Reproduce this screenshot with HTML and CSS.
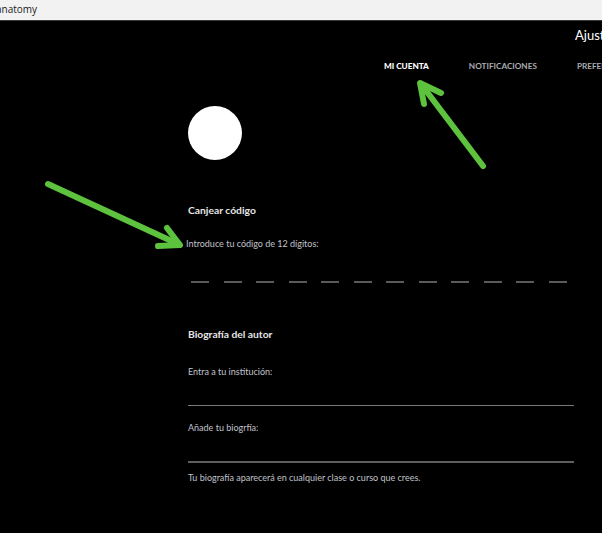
FILE: index.html
```html
<!DOCTYPE html>
<html lang="es">
<head>
<meta charset="utf-8">
<title>Ajustes</title>
<link rel="stylesheet" href="styles.css">
</head>
<body>
<div class="chrome"><span class="chrome-title">anatomy</span></div>
<main class="page">
  <h1 class="page-title">Ajustes de la cuenta</h1>
  <nav class="tabs">
    <span class="tab tab-active">MI CUENTA</span>
    <span class="tab">NOTIFICACIONES</span>
    <span class="tab">PREFERENCIAS</span>
  </nav>
  <section class="content">
    <div class="avatar"></div>
    <h2 class="heading heading-first">Canjear código</h2>
    <p class="label label-code">Introduce tu código de 12 dígitos:</p>
    <div class="code">
      <span></span><span></span><span></span><span></span><span></span><span></span>
      <span></span><span></span><span></span><span></span><span></span><span></span>
    </div>
    <h2 class="heading heading-bio">Biografía del autor</h2>
    <p class="label label-inst">Entra a tu institución:</p>
    <div class="field-line line-inst"></div>
    <p class="label label-bio">Añade tu biogrfía:</p>
    <div class="field-line line-bio"></div>
    <p class="label label-hint">Tu biografía aparecerá en cualquier clase o curso que crees.</p>
  </section>
</main>
<svg class="arrows" width="602" height="533" viewBox="0 0 602 533">
  <g fill="none" stroke="#5dc23d" stroke-width="6" stroke-linecap="round" stroke-linejoin="round">
    <path d="M48 184 L178 244"/>
    <path d="M167 228 L180 245 L158 246"/>
    <path d="M483 166 L421 84"/>
    <path d="M441 93 L420 83 L424 104"/>
  </g>
</svg>
</body>
</html>
```
FILE: styles.css
```css
html, body {
  margin: 0;
  padding: 0;
}
body {
  width: 602px;
  height: 533px;
  overflow: hidden;
  background: #000;
  font-family: "Lato", "Open Sans", sans-serif;
  position: relative;
}
.chrome {
  height: 21px;
  background: #f2f2f2;
  border-bottom: 1px solid #3a3a3a;
  box-sizing: border-box;
  display: flex;
  align-items: center;
  padding-bottom: 3px;
}
.chrome-title {
  margin-left: -4px;
  font-family: "Open Sans", sans-serif;
  font-size: 10px;
  color: #222;
}
.page {
  color: #e8e8e8;
}
.page-title {
  margin: 6px 0 0 575px;
  font-size: 13px;
  line-height: 16px;
  font-weight: 400;
  color: #fff;
  white-space: nowrap;
}
.tabs {
  display: flex;
  gap: 40px;
  margin: 17px 0 0 384px;
  white-space: nowrap;
}
.tab {
  font-size: 8.2px;
  line-height: 12px;
  font-weight: 700;
  color: #a9acb3;
}
.tab-active {
  color: #fff;
  font-weight: 900;
}
.content {
  margin-left: 188px;
  width: 386px;
  display: flex;
  flex-direction: column;
}
.avatar {
  width: 54px;
  height: 54px;
  border-radius: 50%;
  background: #fff;
  margin-top: 34px;
}
.heading {
  margin: 0;
  font-size: 10.3px;
  line-height: 14px;
  font-weight: 700;
  color: #e6e6e6;
}
.heading-first { margin-top: 43px; }
.heading-bio { margin-top: 44px; }
.label {
  margin: 0;
  font-size: 9px;
  line-height: 12px;
  color: #c0c3cc;
  white-space: nowrap;
}
.label-code { margin-top: 21px; margin-left: -2px; }
.label-inst { margin-top: 25px; }
.label-bio { margin-top: 16px; }
.label-hint { margin-top: 9px; }
.code {
  display: flex;
  gap: 14.5px;
  margin-top: 31px;
  padding-left: 3px;
}
.code span {
  display: block;
  width: 18px;
  height: 2px;
  background: #5a5a5a;
}
.field-line {
  height: 1px;
  background: #7a7a7a;
}
.line-inst { margin-top: 27px; }
.line-bio { margin-top: 27px; height: 2px; background: #5e5e5e; }
.arrows {
  position: absolute;
  left: 0;
  top: 0;
  pointer-events: none;
}
```
